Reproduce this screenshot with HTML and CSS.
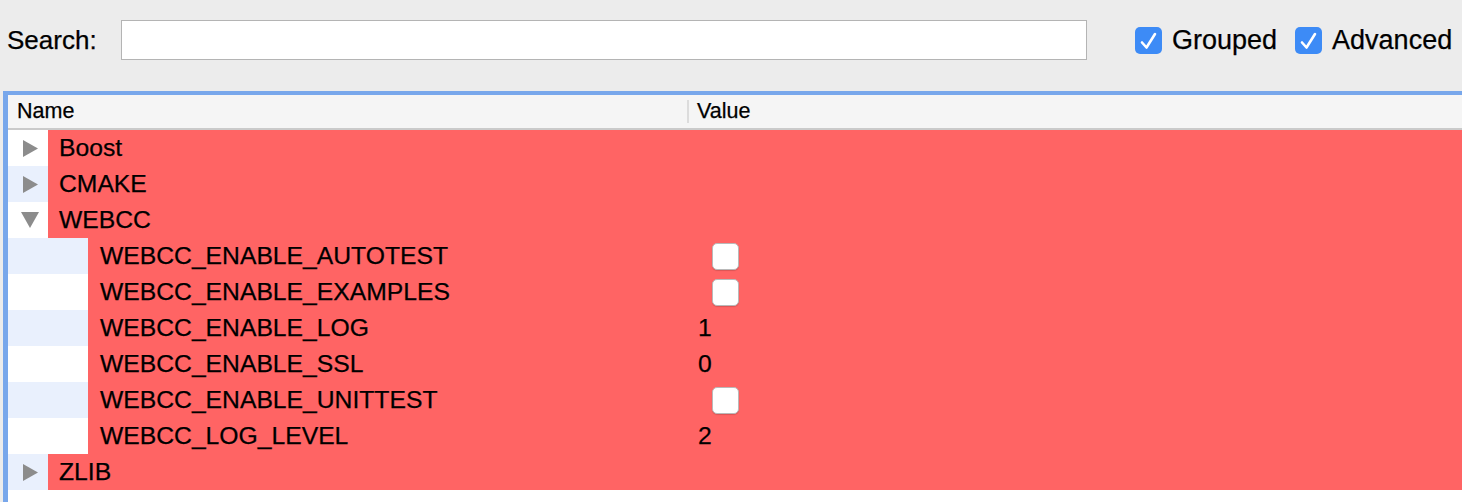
FILE: index.html
```html
<!DOCTYPE html>
<html>
<head>
<meta charset="utf-8">
<link rel="stylesheet" href="styles.css">
</head>
<body>
<div class="toolbar">
  <label class="search-label">Search:</label>
  <div class="search-input"></div>
  <div class="checks">
    <div class="check">
      <span class="cb on"><svg width="27" height="27" viewBox="0 0 27 27"><path d="M7 15.5 L11.5 20.5 L20 7" fill="none" stroke="#fff" stroke-width="2.6" stroke-linecap="round" stroke-linejoin="round"/></svg></span>
      <span class="check-label">Grouped</span>
    </div>
    <div class="check">
      <span class="cb on"><svg width="27" height="27" viewBox="0 0 27 27"><path d="M7 15.5 L11.5 20.5 L20 7" fill="none" stroke="#fff" stroke-width="2.6" stroke-linecap="round" stroke-linejoin="round"/></svg></span>
      <span class="check-label">Advanced</span>
    </div>
  </div>
</div>

<div class="tree">
  <div class="header">
    <div class="hcell name-col">Name</div>
    <div class="hcell value-col"><span class="sep"></span>Value</div>
  </div>
  <div class="rows">
    <div class="row">
      <div class="gutter top"><svg class="arrow" width="15" height="17" viewBox="0 0 15 17"><polygon points="0,0 15,8.5 0,17" fill="#8c8c8c"/></svg></div>
      <div class="cell"><div class="name">Boost</div><div class="value"></div></div>
    </div>
    <div class="row alt">
      <div class="gutter top"><svg class="arrow" width="15" height="17" viewBox="0 0 15 17"><polygon points="0,0 15,8.5 0,17" fill="#8c8c8c"/></svg></div>
      <div class="cell"><div class="name">CMAKE</div><div class="value"></div></div>
    </div>
    <div class="row">
      <div class="gutter top down"><svg class="arrow" width="18" height="16" viewBox="0 0 18 16"><polygon points="0,0 18,0 9,16" fill="#8c8c8c"/></svg></div>
      <div class="cell"><div class="name">WEBCC</div><div class="value"></div></div>
    </div>
    <div class="row alt">
      <div class="gutter child"></div>
      <div class="cell"><div class="name sub">WEBCC_ENABLE_AUTOTEST</div><div class="value"><span class="vbox"></span></div></div>
    </div>
    <div class="row">
      <div class="gutter child"></div>
      <div class="cell"><div class="name sub">WEBCC_ENABLE_EXAMPLES</div><div class="value"><span class="vbox"></span></div></div>
    </div>
    <div class="row alt">
      <div class="gutter child"></div>
      <div class="cell"><div class="name sub">WEBCC_ENABLE_LOG</div><div class="value">1</div></div>
    </div>
    <div class="row">
      <div class="gutter child"></div>
      <div class="cell"><div class="name sub">WEBCC_ENABLE_SSL</div><div class="value">0</div></div>
    </div>
    <div class="row alt">
      <div class="gutter child"></div>
      <div class="cell"><div class="name sub">WEBCC_ENABLE_UNITTEST</div><div class="value"><span class="vbox"></span></div></div>
    </div>
    <div class="row">
      <div class="gutter child"></div>
      <div class="cell"><div class="name sub">WEBCC_LOG_LEVEL</div><div class="value">2</div></div>
    </div>
    <div class="row alt">
      <div class="gutter top"><svg class="arrow" width="15" height="17" viewBox="0 0 15 17"><polygon points="0,0 15,8.5 0,17" fill="#8c8c8c"/></svg></div>
      <div class="cell"><div class="name">ZLIB</div><div class="value"></div></div>
    </div>
  </div>
</div>
</body>
</html>
```

FILE: styles.css
```css
* { box-sizing: border-box; }
html, body {
  margin: 0;
  padding: 0;
  background: #ececec;
  font-family: "Liberation Sans", Arial, sans-serif;
  color: #000;
  overflow: hidden;
  -webkit-text-stroke: 0.25px #000;
}
body { width: 1462px; height: 502px; }

.toolbar {
  height: 91px;
  display: flex;
  align-items: center;
  padding: 0 0 0 7px;
}
.search-label {
  font-size: 26px;
  width: 114px;
}
.search-input {
  width: 966px;
  height: 40px;
  background: #fff;
  border: 1px solid #b4b4b4;
  margin-top: -12px;
}
.checks {
  display: flex;
  align-items: center;
  margin-left: 48px;
  gap: 18px;
}
.check {
  display: flex;
  align-items: center;
  gap: 10px;
}
.cb {
  width: 27px;
  height: 27px;
  border-radius: 5px;
  display: block;
}
.cb.on { background: #3d8bf6; }
.cb svg { display: block; }
.check-label { font-size: 27px; }
.search-label, .checks { position: relative; top: -5px; }

.tree {
  margin-left: 3px;
  border-left: 5px solid #78a7eb;
  border-top: 4px solid #78a7eb;
  background: #fff;
  height: 411px;
  box-shadow: inset 0 1px 0 #4f85d8;
}
.header {
  height: 35px;
  background: #f5f5f5;
  border-bottom: 2px solid #cacaca;
  display: flex;
  align-items: center;
  font-size: 21.5px;
}
.hcell { height: 100%; display: flex; align-items: center; }
.name-col { width: 679px; padding-left: 9px; }
.value-col { position: relative; padding-left: 10px; }
.sep {
  position: absolute;
  left: 0;
  top: 5px;
  bottom: 5px;
  width: 2px;
  background: #dcdcdc;
}

.row {
  height: 36px;
  display: flex;
  background: #fff;
}
.row.alt { background: #e9f0fd; }
.gutter {
  flex: none;
  display: flex;
  align-items: center;
}
.gutter.top { width: 40px; padding-left: 15px; }
.gutter.top.down { padding-left: 13px; }
.gutter.child { width: 80px; }
.arrow { display: block; }
.cell {
  flex: 1;
  background: #ff6464;
  display: flex;
  align-items: center;
  font-size: 24.7px;
}
.name { padding-left: 11px; }
.gutter.top + .cell .name { width: 639px; }
.gutter.child + .cell .name { width: 599px; padding-left: 12px; }
.value { padding-left: 11px; display: flex; align-items: center; }
.vbox {
  display: block;
  width: 27px;
  height: 27px;
  margin-left: 14px;
  background: #fff;
  border: 1px solid #b9b9b9;
  border-radius: 5px;
  box-shadow: 0 1px 1px rgba(0,0,0,0.15);
}
```
